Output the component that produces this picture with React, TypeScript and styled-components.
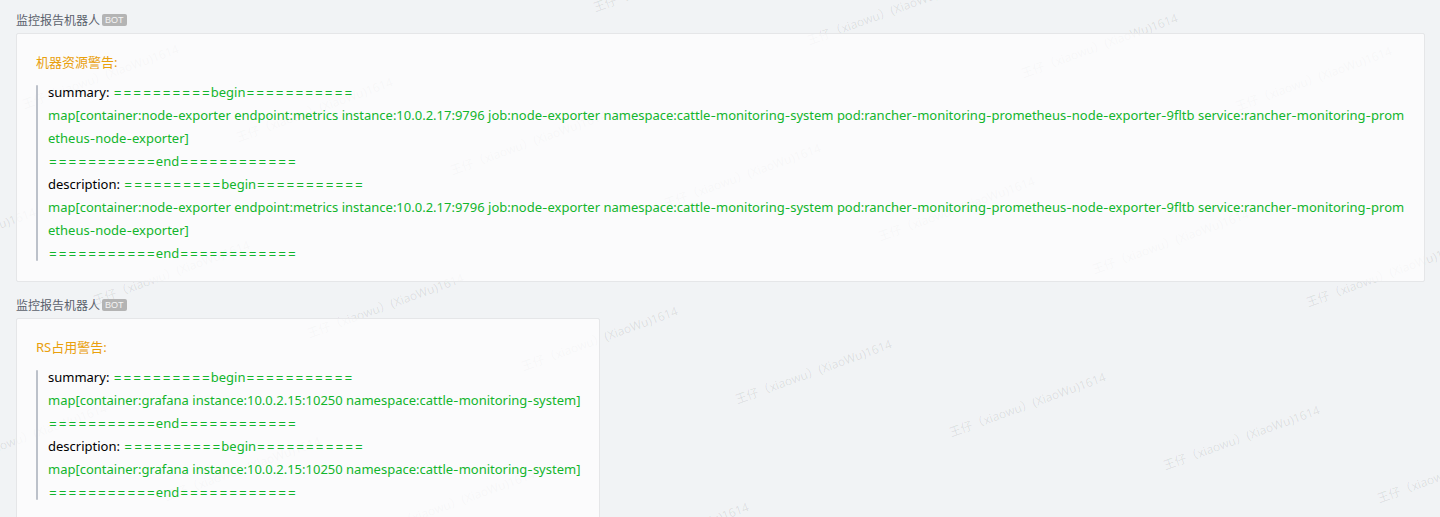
import React, { useEffect, useState } from 'react';
import styled, { createGlobalStyle } from 'styled-components';

const GlobalStyle = createGlobalStyle`
  * {
    box-sizing: border-box;
  }
  body {
    margin: 0;
    background: #f1f3f5;
    font-family: 'Noto Sans', 'Noto Sans CJK SC', sans-serif;
  }
`;

const Viewport = styled.main`
  position: relative;
  height: 100vh;
  overflow: hidden;
`;

const WatermarkLayer = styled.div`
  position: absolute;
  inset: 0;
  overflow: hidden;
  pointer-events: none;
  user-select: none;
`;

const Mark = styled.span`
  position: absolute;
  color: rgba(0, 0, 0, 0.09);
  font-size: 12px;
  line-height: 12px;
  white-space: nowrap;
  transform: rotate(-20deg);
  transform-origin: 0 100%;
`;

const MessageList = styled.div`
  position: relative;
  display: flex;
  flex-direction: column;
  gap: 13px;
  padding: 10px 15px 16px 16px;
`;

const Message = styled.article`
  display: flex;
  flex-direction: column;
  align-items: flex-start;
  gap: 3px;
`;

const Sender = styled.header`
  display: flex;
  align-items: center;
  gap: 2px;
  height: 20px;
`;

const SenderName = styled.span`
  color: #5b616c;
  font-family: 'Noto Sans CJK SC', sans-serif;
  font-size: 12px;
  line-height: 20px;
`;

const BotBadge = styled.span`
  padding: 0 3px;
  border-radius: 2px;
  background: #b4b4b4;
  color: #f4f4f4;
  font-family: 'Liberation Sans', sans-serif;
  font-size: 9px;
  line-height: 12px;
`;

const Card = styled.section`
  display: flex;
  flex-direction: column;
  gap: 7px;
  max-width: 100%;
  padding: 17px 19px 16px 19px;
  border: 1px solid #e5e6e8;
  border-radius: 2px;
  background: rgba(254, 254, 254, 0.76);
  background-clip: padding-box;
`;

const CardTitle = styled.h2`
  margin: 0;
  color: #e9a00c;
  font-size: 13px;
  font-weight: 400;
  line-height: 23px;
`;

const Quote = styled.blockquote`
  display: flex;
  gap: 10px;
  margin: 0;

  &::before {
    content: '';
    flex: none;
    width: 2px;
    margin: 4px 0;
    border-radius: 1px;
    background: #bcc1ca;
  }
`;

const QuoteBody = styled.div`
  min-width: 0;
  font-size: 13px;
  line-height: 23px;
`;

const Line = styled.p`
  margin: 0;
  color: #12b52c;
  word-break: break-all;
`;

const Label = styled.span`
  color: #000;
`;

const Rule = styled.span`
  font-family: 'Inter', sans-serif;
  font-size: 15px;
  font-weight: 300;
  line-height: 1;
`;

const Dash = styled.span`
  font-family: 'Inter', sans-serif;
  font-size: 12px;
  line-height: 1;
`;

interface Field {
  name: string;
  value: string;
}

interface Alert {
  title: string;
  fields: Field[];
}

const nodeExporter =
  'map[container:node-exporter endpoint:metrics instance:10.0.2.17:9796 job:node-exporter namespace:cattle-monitoring-system pod:rancher-monitoring-prometheus-node-exporter-9fltb service:rancher-monitoring-prometheus-node-exporter]';
const grafana =
  'map[container:grafana instance:10.0.2.15:10250 namespace:cattle-monitoring-system]';

const alerts: Alert[] = [
  {
    title: '机器资源警告:',
    fields: [
      { name: 'summary', value: nodeExporter },
      { name: 'description', value: nodeExporter },
    ],
  },
  {
    title: 'RS占用警告:',
    fields: [
      { name: 'summary', value: grafana },
      { name: 'description', value: grafana },
    ],
  },
];

const WATERMARK = '王仔（xiaowu）(XiaoWu)1614';

function useWindowSize() {
  const read = () => ({ width: window.innerWidth, height: window.innerHeight });
  const [size, setSize] = useState(read);
  useEffect(() => {
    const onResize = () => setSize(read());
    window.addEventListener('resize', onResize);
    return () => window.removeEventListener('resize', onResize);
  }, []);
  return size;
}

/* Marks repeat on a slanted grid: one step along a row, one step down. */
function Watermark() {
  const { width, height } = useWindowSize();
  const marks: { left: number; top: number }[] = [];
  for (let row = -12; row < 20; row++) {
    for (let col = -12; col < 20; col++) {
      const left = 25 + col * 214 + row * 71;
      const top = 99 + col * 33 + row * 196;
      if (left > -180 && left < width && top > -20 && top < height + 70) {
        marks.push({ left, top });
      }
    }
  }
  return (
    <WatermarkLayer aria-hidden="true">
      {marks.map(({ left, top }) => (
        <Mark key={`${left}:${top}`} style={{ left, top }}>
          {WATERMARK}
        </Mark>
      ))}
    </WatermarkLayer>
  );
}

function Dashed({ text }: { text: string }) {
  return (
    <>
      {text.split(/(-)/).map((part, i) => (part === '-' ? <Dash key={i}>-</Dash> : part))}
    </>
  );
}

function FieldLines({ name, value }: Field) {
  return (
    <>
      <Line>
        <Label>{name}: </Label>
        <Rule>{'='.repeat(10)}</Rule>begin<Rule>{'='.repeat(11)}</Rule>
      </Line>
      <Line>
        <Dashed text={value} />
      </Line>
      <Line>
        <Rule>{'='.repeat(11)}</Rule>end<Rule>{'='.repeat(12)}</Rule>
      </Line>
    </>
  );
}

export default function App() {
  return (
    <>
      <GlobalStyle />
      <Viewport>
        <Watermark />
        <MessageList>
          {alerts.map((alert) => (
            <Message key={alert.title}>
              <Sender>
                <SenderName>监控报告机器人</SenderName>
                <BotBadge>BOT</BotBadge>
              </Sender>
              <Card>
                <CardTitle>{alert.title}</CardTitle>
                <Quote>
                  <QuoteBody>
                    {alert.fields.map((field) => (
                      <FieldLines key={field.name} {...field} />
                    ))}
                  </QuoteBody>
                </Quote>
              </Card>
            </Message>
          ))}
        </MessageList>
      </Viewport>
    </>
  );
}
